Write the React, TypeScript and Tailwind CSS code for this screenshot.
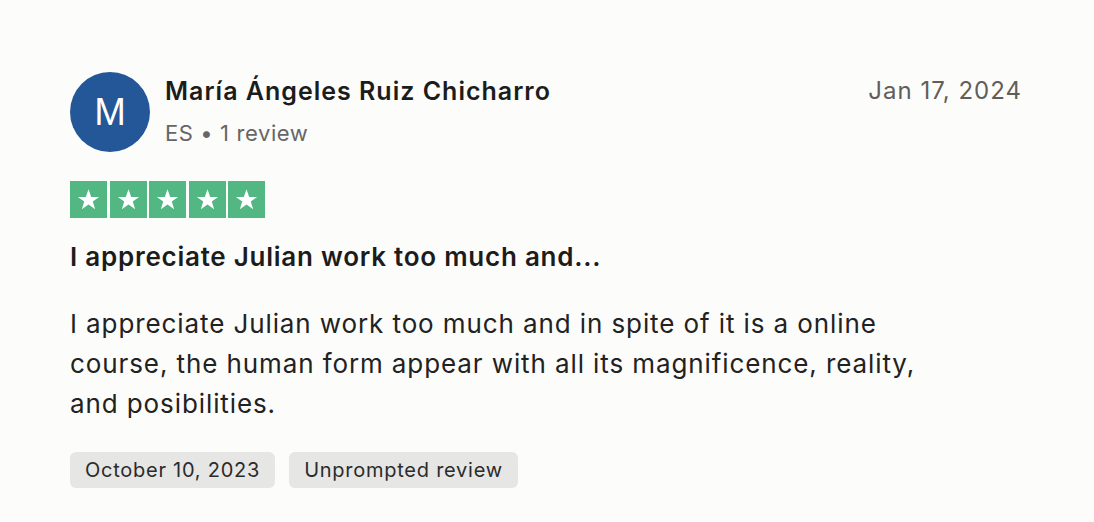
import React from "react";

const Star = () => (
  <div className="flex h-[37px] w-[37px] items-center justify-center bg-[#53b783]">
    <svg viewBox="0 0 24 24" className="h-[25px] w-[25px]" fill="#fff">
      <path d="M12 2.2l2.6 7.3h7.6l-6.1 4.5 2.3 7.4L12 16.9l-6.4 4.5 2.3-7.4-6.1-4.5h7.6z" />
    </svg>
  </div>
);

const Tag = ({ children }: { children: React.ReactNode }) => (
  <span className="flex h-[36px] items-center rounded-[6px] bg-[#e6e6e5] px-[15px] text-[20px] tracking-[0.75px] text-[#2b2b2b]">{children}</span>
);

export default function App() {
  return (
    <div className="h-[522px] w-[1094px] bg-[#fcfcfb] px-[70px] pt-[72px] font-['Inter',sans-serif] text-[#1c1c1c]">
      <div className="flex items-start justify-between">
        <div className="flex items-start gap-[15px]">
          <div className="flex h-[80px] w-[80px] items-center justify-center rounded-full bg-[#245797] font-['Liberation_Sans',sans-serif] text-[38px] text-white">
            M
          </div>
          <div className="pt-[1px]">
            <div className="text-[25px] font-semibold leading-[36px] tracking-[1px]">María Ángeles Ruiz Chicharro</div>
            <div className="mt-[10px] text-[22px] leading-[28px] tracking-[0.6px] text-[#666664]">ES • 1 review</div>
          </div>
        </div>
        <div className="mr-[2px] pt-[4px] text-[24px] leading-[30px] tracking-[1px] text-[#5f5e5a]">Jan 17, 2024</div>
      </div>

      <div className="mt-[29px] flex gap-[2.5px]">
        {[0, 1, 2, 3, 4].map((i) => (
          <Star key={i} />
        ))}
      </div>

      <div className="mt-[23px] text-[26px] font-semibold leading-[32px] tracking-[0.75px]">I appreciate Julian work too much and...</div>

      <p className="mt-[31px] w-[880px] text-[26px] leading-[40px] tracking-[0.9px] text-[#222]">
        I appreciate Julian work too much and in spite of it is a online course, the human form appear with all its magnificence, reality,
        and posibilities.
      </p>

      <div className="mt-[28px] flex gap-[14px]">
        <Tag>October 10, 2023</Tag>
        <Tag>Unprompted review</Tag>
      </div>
    </div>
  );
}
